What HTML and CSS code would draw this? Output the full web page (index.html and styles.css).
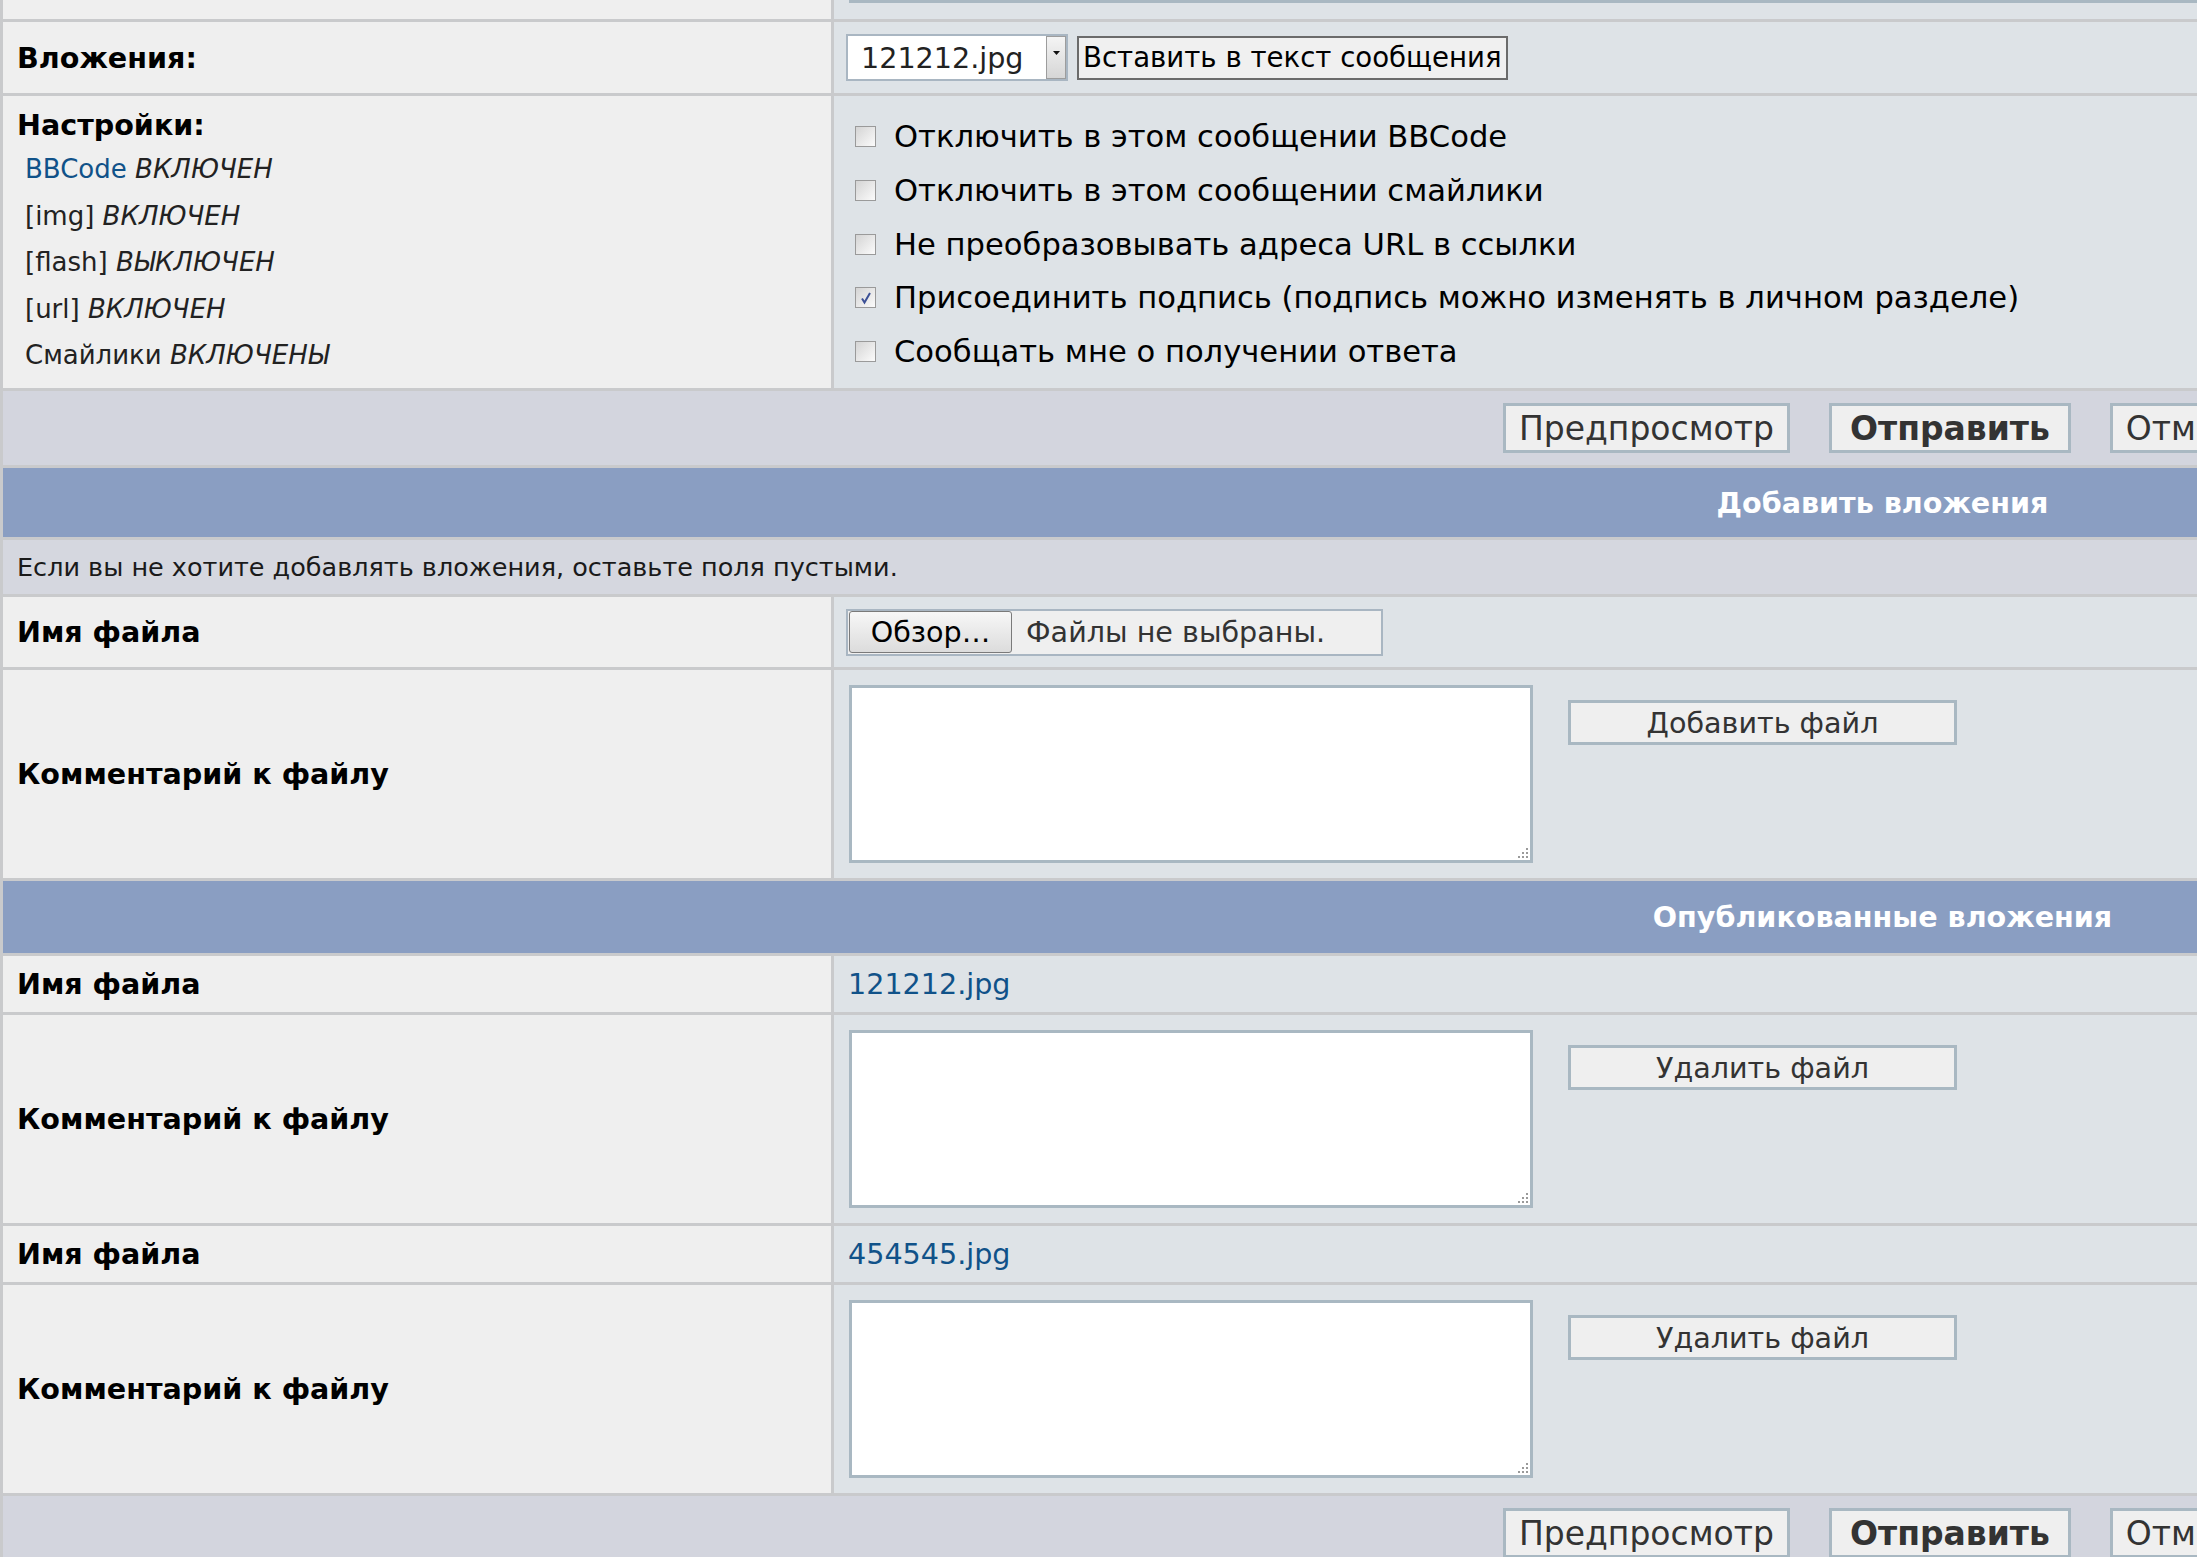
FILE: index.html
```html
<!DOCTYPE html>
<html lang="ru">
<head>
  <meta charset="UTF-8">
  <title>Отправить сообщение</title>
  <link rel="stylesheet" href="styles.css">
</head>
<body>
  <div class="form-table">
    <!-- tail of the message row above -->
    <div class="cell row1 r-top"></div>
    <div class="cell row2 r-top top-cut"><div class="msg-edge"></div></div>

    <div class="cell row1 r-attach"><b class="label">Вложения:</b></div>
    <div class="cell row2 r-attach">
      <div class="select">
        <span class="select-value">121212.jpg</span>
        <span class="select-arrow">
          <svg width="7" height="4" viewBox="0 0 7 4"><path d="M0 0h7L3.5 4z" fill="#111"/></svg>
        </span>
      </div>
      <button class="btn-insert">Вставить в текст сообщения</button>
    </div>

    <div class="cell row1 r-options settings">
      <b class="label">Настройки:</b>
      <span class="small"><a href="#">BBCode</a> <i>ВКЛЮЧЕН</i></span>
      <span class="small">[img] <i>ВКЛЮЧЕН</i></span>
      <span class="small">[flash] <i>ВЫКЛЮЧЕН</i></span>
      <span class="small">[url] <i>ВКЛЮЧЕН</i></span>
      <span class="small">Смайлики <i>ВКЛЮЧЕНЫ</i></span>
    </div>
    <div class="cell row2 r-options options">
      <label class="option"><span class="check"></span>Отключить в этом сообщении BBCode</label>
      <label class="option"><span class="check"></span>Отключить в этом сообщении смайлики</label>
      <label class="option"><span class="check"></span>Не преобразовывать адреса URL в ссылки</label>
      <label class="option">
        <span class="check">
          <svg width="14" height="14" viewBox="0 0 14 14"><path d="M3 7.5l2.5 4L11 2" fill="none" stroke="#3d5196" stroke-width="2"/></svg>
        </span>Присоединить подпись (подпись можно изменять в личном разделе)
      </label>
      <label class="option"><span class="check"></span>Сообщать мне о получении ответа</label>
    </div>

    <div class="cell cat span r-buttons">
      <button class="btn">Предпросмотр</button>
      <button class="btn btn-main">Отправить</button>
      <button class="btn">Отмена</button>
    </div>

    <div class="cell head span r-head">Добавить вложения</div>

    <div class="cell info span r-info">Если вы не хотите добавлять вложения, оставьте поля пустыми.</div>

    <div class="cell row1 r-file"><b class="label">Имя файла</b></div>
    <div class="cell row2 r-file">
      <div class="file-input">
        <span class="file-btn">Обзор…</span>
        <span class="file-text">Файлы не выбраны.</span>
      </div>
    </div>

    <div class="cell row1 r-comment"><b class="label">Комментарий к файлу</b></div>
    <div class="cell row2 r-comment comment">
      <div class="textarea">
        <svg class="grip" width="10" height="10" viewBox="0 0 10 10" fill="#9a9a9a">
          <rect x="8" y="0" width="2" height="2"/>
          <rect x="4" y="4" width="2" height="2"/><rect x="8" y="4" width="2" height="2"/>
          <rect x="0" y="8" width="2" height="2"/><rect x="4" y="8" width="2" height="2"/><rect x="8" y="8" width="2" height="2"/>
        </svg>
      </div>
      <button class="btn-side">Добавить файл</button>
    </div>

    <div class="cell head span r-head2">Опубликованные вложения</div>

    <div class="cell row1 r-name"><b class="label">Имя файла</b></div>
    <div class="cell row2 r-name"><a class="file-link" href="#">121212.jpg</a></div>

    <div class="cell row1 r-comment"><b class="label">Комментарий к файлу</b></div>
    <div class="cell row2 r-comment comment">
      <div class="textarea">
        <svg class="grip" width="10" height="10" viewBox="0 0 10 10" fill="#9a9a9a">
          <rect x="8" y="0" width="2" height="2"/>
          <rect x="4" y="4" width="2" height="2"/><rect x="8" y="4" width="2" height="2"/>
          <rect x="0" y="8" width="2" height="2"/><rect x="4" y="8" width="2" height="2"/><rect x="8" y="8" width="2" height="2"/>
        </svg>
      </div>
      <button class="btn-side">Удалить файл</button>
    </div>

    <div class="cell row1 r-name"><b class="label">Имя файла</b></div>
    <div class="cell row2 r-name"><a class="file-link" href="#">454545.jpg</a></div>

    <div class="cell row1 r-comment"><b class="label">Комментарий к файлу</b></div>
    <div class="cell row2 r-comment comment">
      <div class="textarea">
        <svg class="grip" width="10" height="10" viewBox="0 0 10 10" fill="#9a9a9a">
          <rect x="8" y="0" width="2" height="2"/>
          <rect x="4" y="4" width="2" height="2"/><rect x="8" y="4" width="2" height="2"/>
          <rect x="0" y="8" width="2" height="2"/><rect x="4" y="8" width="2" height="2"/><rect x="8" y="8" width="2" height="2"/>
        </svg>
      </div>
      <button class="btn-side">Удалить файл</button>
    </div>

    <div class="cell cat span r-buttons">
      <button class="btn">Предпросмотр</button>
      <button class="btn btn-main">Отправить</button>
      <button class="btn">Отмена</button>
    </div>
  </div>
</body>
</html>
```

FILE: styles.css
```css
* {
  box-sizing: border-box;
  margin: 0;
  padding: 0;
}

html,
body {
  overflow: hidden;
}

body {
  font-family: "DejaVu Sans", Verdana, sans-serif;
  color: #000;
  background: #fff;
}

a {
  color: #105289;
  text-decoration: none;
}

/* table */

.form-table {
  display: grid;
  grid-template-columns: 828px 1fr;
  gap: 3px;
  width: 3765px;
  padding: 0 3px 3px;
  background: #c9cacc;
}

.cell {
  display: flex;
  align-items: center;
}

.span {
  grid-column: 1 / -1;
}

.row1 {
  background: #efefef;
  padding-left: 14px;
}

.row2 {
  background: #dee3e7;
  padding-left: 12px;
}

.r-top { height: 19px; }
.r-attach { height: 71px; }
.r-options { height: 292px; }
.r-buttons { height: 74px; }
.r-head { height: 69px; }
.r-head2 { height: 72px; }
.r-info { height: 54px; }
.r-file { height: 70px; }
.r-comment { height: 208px; }
.r-name { height: 56px; }

.label {
  font-size: 28.6px;
  font-weight: bold;
}

.top-cut {
  align-items: flex-start;
}

.msg-edge {
  width: 100%;
  height: 3px;
  margin-left: 3px;
  background: #a9b8c2;
}

/* attachments select */

.select {
  display: flex;
  width: 222px;
  height: 47px;
  border: 2px solid #a9b6c2;
  background: #fff;
  font-size: 28.6px;
  color: #222;
}

.select-value {
  flex: 1;
  display: flex;
  align-items: center;
  padding-left: 13px;
}

.select-arrow {
  width: 20px;
  display: flex;
  justify-content: center;
  padding-top: 14px;
  border: 1px solid #9d9d9d;
  background: linear-gradient(#f4f4f4, #d6d6d6);
}

.btn-insert {
  height: 44px;
  margin-left: 9px;
  padding: 0 4px;
  border: 2px solid #6b6b6b;
  background: #f0f0f0;
  font-family: inherit;
  font-size: 27.6px;
  color: #000;
}

/* settings */

.settings {
  flex-direction: column;
  align-items: flex-start;
  padding-top: 11px;
}

.settings .label {
  line-height: 36px;
  margin-bottom: 3px;
}

.small {
  font-size: 26px;
  line-height: 46.5px;
  margin-left: 8px;
  color: #222;
}

.options {
  flex-direction: column;
  align-items: flex-start;
  padding-top: 14px;
}

.option {
  display: flex;
  align-items: center;
  height: 53.7px;
  font-size: 30.6px;
}

.check {
  display: flex;
  align-items: center;
  justify-content: center;
  width: 21px;
  height: 21px;
  margin: 0 18px 0 9px;
  border: 1px solid #9a9a9a;
  background: linear-gradient(135deg, #d4d4d4, #fbfbfb);
}

/* rows */

.cat {
  justify-content: center;
  gap: 39px;
  padding-left: 12px;
  background: #d3d5de;
}

.btn {
  height: 50px;
  padding: 0 13px;
  border: 3px solid #a9b8c2;
  background: #efefef;
  font-family: inherit;
  font-size: 33px;
  color: #333;
}

.btn-main {
  padding: 0 18px;
  font-weight: bold;
}

.head {
  justify-content: center;
  background: #8a9ec2;
  color: #fff;
  font-size: 28.6px;
  font-weight: bold;
}

.info {
  padding-left: 14px;
  background: #d5d7df;
  font-size: 25.5px;
  color: #1a1a1a;
}

.file-input {
  display: flex;
  align-items: center;
  width: 537px;
  height: 47px;
  padding-left: 1px;
  border: 2px solid #a9b6c2;
  background: #efefef;
  font-size: 28.6px;
}

.file-btn {
  display: flex;
  align-items: center;
  justify-content: center;
  width: 163px;
  height: 42px;
  border: 1px solid #7a7a7a;
  border-radius: 3px;
  background: linear-gradient(#f7f7f7, #dcdcdc);
}

.file-text {
  margin-left: 14px;
  color: #333;
}

.comment {
  align-items: flex-start;
  padding-top: 15px;
}

.textarea {
  position: relative;
  width: 684px;
  height: 178px;
  margin-left: 3px;
  border: 3px solid #a9b8c2;
  background: #fff;
}

.grip {
  position: absolute;
  right: 2px;
  bottom: 2px;
}

.btn-side {
  width: 389px;
  height: 45px;
  margin: 15px 0 0 35px;
  border: 3px solid #a9b8c2;
  background: #efefef;
  font-family: inherit;
  font-size: 28.6px;
  color: #333;
}

.file-link {
  margin-left: 2px;
  font-size: 28.6px;
}
```
